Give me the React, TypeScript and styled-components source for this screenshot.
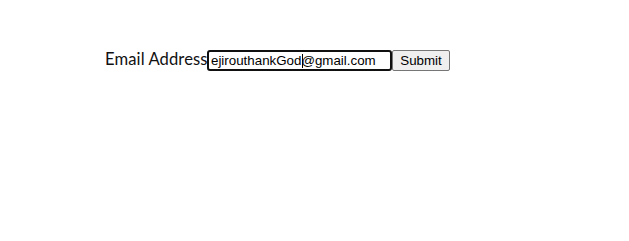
import React from "react";
import styled, { createGlobalStyle } from "styled-components";

const GlobalStyle = createGlobalStyle`
  html, body {
    margin: 0;
    background: #ffffff;
  }
`;

export default function App() {
  return (
    <>
      <GlobalStyle />
      <Page>
        <Form onSubmit={(e) => e.preventDefault()}>
          <Label htmlFor="email">Email Address</Label>
          <Field>
            <Input id="email" type="email" defaultValue="ejirouthankGod@gmail.com" />
            <Caret />
          </Field>
          <Button type="submit">Submit</Button>
        </Form>
      </Page>
    </>
  );
}

const Page = styled.div`
  width: 629px;
  height: 241px;
  padding: 50px 0 0 105px;
  box-sizing: border-box;
`;

const Form = styled.form`
  display: flex;
  align-items: center;
  height: 21px;
`;

const Label = styled.label`
  width: 102px;
  font-family: "Lato", "Open Sans", sans-serif;
  font-size: 16.6px;
  letter-spacing: 0.1px;
  white-space: nowrap;
  color: #111;
  line-height: 19px;
  margin-top: -3px;
`;

const Field = styled.div`
  position: relative;
  display: flex;
`;

const Input = styled.input`
  width: 185px;
  height: 21px;
  box-sizing: border-box;
  border: 2px solid #101010;
  border-radius: 3px;
  padding: 0 2px;
  font-family: "Liberation Sans", Arial, sans-serif;
  font-size: 13.33px;
  color: #000;
  background: #fff;
  outline: none;
`;

const Caret = styled.span`
  position: absolute;
  left: 95px;
  top: 4px;
  width: 1px;
  height: 14px;
  background: #000;
`;

const Button = styled.button`
  width: 58px;
  height: 21px;
  box-sizing: border-box;
  padding: 1px 6px;
  border: 1px solid #767676;
  border-radius: 2px;
  background: #efefef;
  font-family: "Liberation Sans", Arial, sans-serif;
  font-size: 13.33px;
  color: #000;
`;
